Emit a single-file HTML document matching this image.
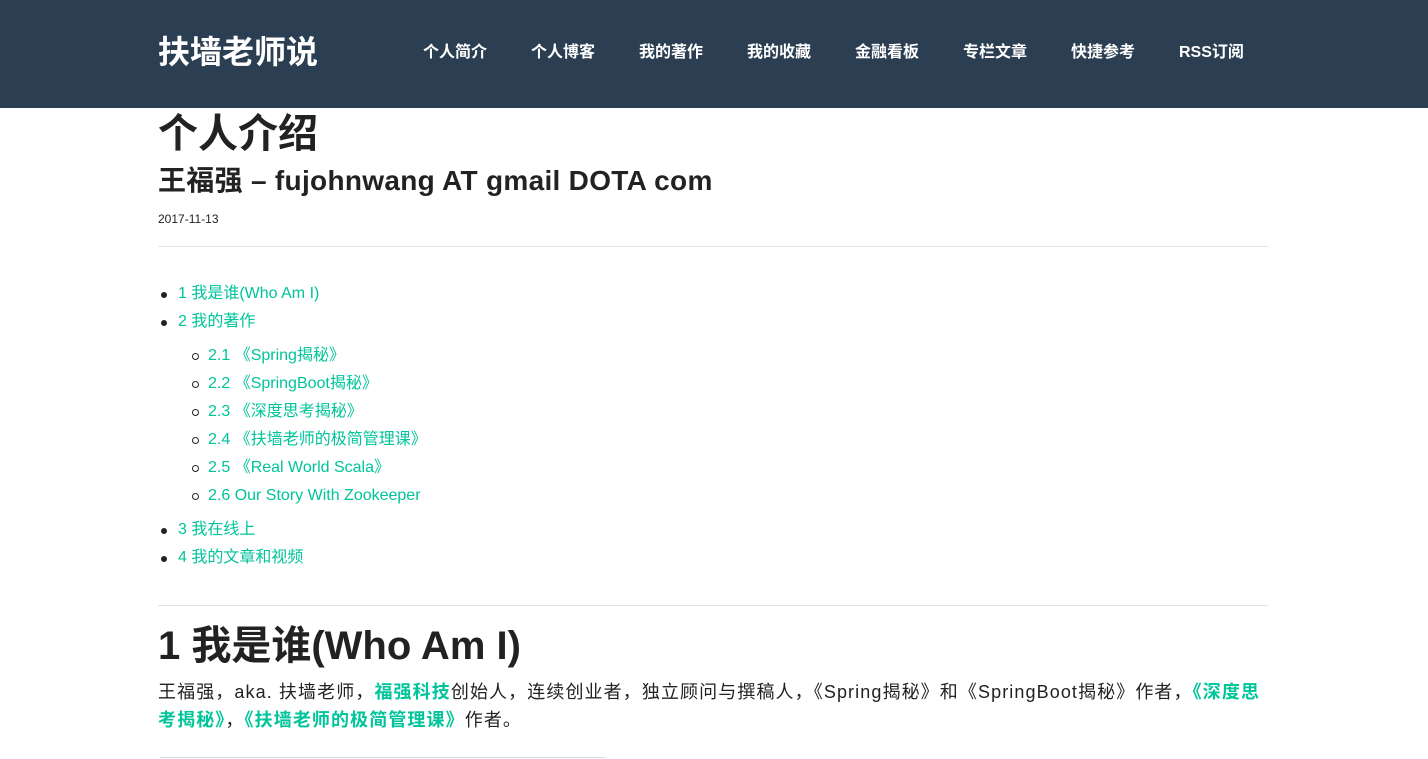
<!DOCTYPE html>
<html><head><meta charset="utf-8"><style>
*{margin:0;padding:0;box-sizing:border-box}
body{width:1428px;height:759px;overflow:hidden;background:#fff;font-family:"Liberation Sans","Noto Sans CJK SC",sans-serif;color:#222}
.hd{height:108px;background:#2b3e52;position:relative}
.logo{position:absolute;left:158px;top:33px;font-size:32px;font-weight:bold;color:#fff;line-height:38px}
.nav a{position:absolute;top:42px;font-size:16px;font-weight:bold;color:#fff;text-decoration:none;line-height:22px}
.c{position:absolute;left:158px;width:1110px}
a{color:#00c49a;text-decoration:none}
.toc li{font-size:16px;line-height:28px;position:absolute;white-space:nowrap;list-style:none}
.dot{position:absolute;width:6px;height:6px;border-radius:50%;background:#222}
.circ{position:absolute;width:7px;height:7px;border-radius:50%;border:1px solid #222;background:#fff}
.p a{font-weight:bold}
</style></head><body>
<div class="hd">
<div class="logo">扶墙老师说</div>
<div class="nav">
<a style="left:423px">个人简介</a><a style="left:531px">个人博客</a><a style="left:639px">我的著作</a><a style="left:747px">我的收藏</a><a style="left:855px">金融看板</a><a style="left:963px">专栏文章</a><a style="left:1071px">快捷参考</a><a style="left:1179px">RSS订阅</a>
</div></div>
<div class="c" style="top:110px;font-size:40px;font-weight:bold;line-height:48px">个人介绍</div>
<div class="c" style="top:164px;font-size:28px;font-weight:bold;line-height:34px;letter-spacing:0.3px">王福强 – fujohnwang AT gmail DOTA com</div>
<div class="c" style="top:211px;font-size:12px;line-height:16px">2017-11-13</div>
<div class="c" style="top:246px;border-top:1px solid #e3e3e3"></div>
<div class="toc">
<span class="dot" style="left:161px;top:292px"></span><li style="left:178px;top:280px"><a>1 我是谁(Who Am I)</a></li>
<span class="dot" style="left:161px;top:320px"></span><li style="left:178px;top:308px"><a>2 我的著作</a></li>
<span class="circ" style="left:192px;top:353px"></span><li style="left:208px;top:342px"><a>2.1 《Spring揭秘》</a></li>
<span class="circ" style="left:192px;top:381px"></span><li style="left:208px;top:370px"><a>2.2 《SpringBoot揭秘》</a></li>
<span class="circ" style="left:192px;top:409px"></span><li style="left:208px;top:398px"><a>2.3 《深度思考揭秘》</a></li>
<span class="circ" style="left:192px;top:437px"></span><li style="left:208px;top:426px"><a>2.4 《扶墙老师的极简管理课》</a></li>
<span class="circ" style="left:192px;top:465px"></span><li style="left:208px;top:454px"><a>2.5 《Real World Scala》</a></li>
<span class="circ" style="left:192px;top:493px"></span><li style="left:208px;top:482px"><a>2.6 Our Story With Zookeeper</a></li>
<span class="dot" style="left:161px;top:528px"></span><li style="left:178px;top:516px"><a>3 我在线上</a></li>
<span class="dot" style="left:161px;top:556px"></span><li style="left:178px;top:544px"><a>4 我的文章和视频</a></li>
</div>
<div class="c" style="top:605px;border-top:1px solid #e3e3e3"></div>
<div class="c" style="top:622px;font-size:40px;font-weight:bold;line-height:48px">1 我是谁(Who Am I)</div>
<div class="c p" style="top:678px;width:1200px;font-size:18px;line-height:28px;letter-spacing:1.1px;white-space:nowrap">王福强，aka. 扶墙老师，<a>福强科技</a>创始人，连续创业者，独立顾问与撰稿人，《Spring揭秘》和《SpringBoot揭秘》作者，<a>《深度思</a><br><a>考揭秘》</a>，<a>《扶墙老师的极简管理课》</a>作者。</div>
<div style="position:absolute;left:160px;top:757px;width:445px;border-top:1px solid #ddd"></div>
</body></html>
